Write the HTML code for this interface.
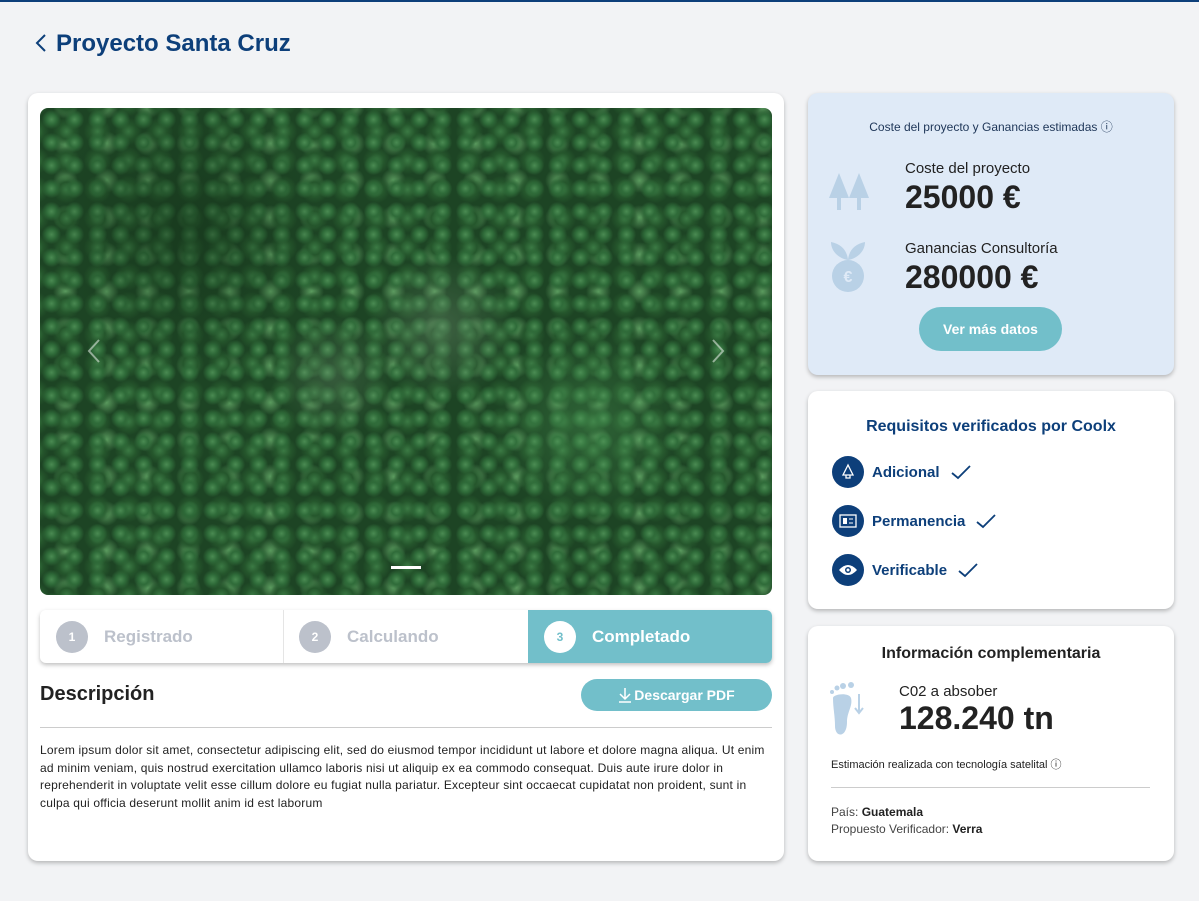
<!DOCTYPE html>
<html><head><meta charset="utf-8"><style>
*{box-sizing:border-box;margin:0;padding:0}
body{width:1199px;height:901px;background:#f2f3f5;font-family:"Liberation Sans",sans-serif;position:relative;overflow:hidden}
.abs{position:absolute}
.card{position:absolute;background:#fff;border-radius:10px;box-shadow:0 2px 4px rgba(0,0,0,.25)}
h1{position:absolute;left:56px;top:30px;font-size:24px;font-weight:bold;color:#0d3f7a}
.img{position:absolute;left:40px;top:108px;width:732px;height:487px;border-radius:8px;overflow:hidden;
background:
radial-gradient(circle at 55% 45%,rgba(120,150,120,.35) 0,transparent 15%),
radial-gradient(circle at 40% 55%,rgba(130,160,130,.25) 0,transparent 12%),
radial-gradient(circle at 75% 65%,rgba(80,160,90,.35) 0,transparent 15%),
radial-gradient(circle at 20% 25%,rgba(20,50,25,.5) 0,transparent 20%),
radial-gradient(circle,#4a8a52 0,#2f6b39 30%,transparent 60%) 0 0/23px 23px,
radial-gradient(circle,#3b7a44 0,#25562c 35%,transparent 65%) 11px 9px/31px 29px,
radial-gradient(circle,#5a9a5e 0,transparent 45%) 5px 17px/41px 37px,
#1d4424}
.step{position:absolute;top:610px;height:53px;display:flex;align-items:center;font-size:17px;font-weight:bold;color:#bcc1cb}
.num{width:32px;height:32px;border-radius:50%;background:#bcc1cb;color:#fff;font-size:12px;display:flex;align-items:center;justify-content:center;margin-right:16px}
.req{position:absolute;left:832px;display:flex;align-items:center;font-size:15px;font-weight:bold;color:#0d3f7a}
.ic{width:32px;height:32px;border-radius:50%;background:#0d3f7a;margin-right:8px;display:flex;align-items:center;justify-content:center}
</style></head><body>
<div class="abs" style="left:0;top:0;width:1199px;height:2px;background:#0d3f7a"></div>
<svg class="abs" style="left:34px;top:33px" width="14" height="20"><path d="M11 2 L3 10 L11 18" stroke="#0d3f7a" stroke-width="2" fill="none"/></svg>
<h1>Proyecto Santa Cruz</h1>

<div class="card" style="left:28px;top:93px;width:756px;height:768px"></div>
<div class="img"></div>
<svg class="abs" style="left:86px;top:338px" width="16" height="26"><path d="M13 2 L3 13 L13 24" stroke="rgba(255,255,255,.5)" stroke-width="2" fill="none"/></svg>
<svg class="abs" style="left:710px;top:338px" width="16" height="26"><path d="M3 2 L13 13 L3 24" stroke="rgba(255,255,255,.5)" stroke-width="2" fill="none"/></svg>
<div class="abs" style="left:391px;top:566px;width:30px;height:3px;background:#fff"></div>

<div class="card" style="left:40px;top:610px;width:732px;height:53px;border-radius:6px"></div>
<div class="abs" style="left:528px;top:610px;width:244px;height:53px;background:#72bfca;border-radius:0 6px 6px 0"></div>
<div class="abs" style="left:283px;top:610px;width:1px;height:53px;background:#e5e5e5"></div>
<div class="step" style="left:56px"><div class="num">1</div>Registrado</div>
<div class="step" style="left:299px"><div class="num">2</div>Calculando</div>
<div class="step" style="left:544px;color:#fff"><div class="num" style="background:#fff;color:#72bfca">3</div>Completado</div>

<div class="abs" style="left:40px;top:683px;font-size:20px;font-weight:bold;color:#222">Descripción</div>
<div class="abs" style="left:581px;top:679px;width:191px;height:32px;border-radius:16px;background:#72bfca;color:#fff;font-size:14px;font-weight:bold;display:flex;align-items:center;justify-content:center">
<svg width="14" height="16" style="margin-right:2px"><path d="M7 1 V12 M2 7 L7 12 L12 7 M1 15 H13" stroke="#fff" stroke-width="1.5" fill="none"/></svg>Descargar PDF</div>
<div class="abs" style="left:40px;top:727px;width:732px;height:1px;background:#ccc"></div>
<div class="abs" style="left:40px;top:742px;width:730px;font-size:12px;letter-spacing:.2px;line-height:17.5px;color:#222">Lorem ipsum dolor sit amet, consectetur adipiscing elit, sed do eiusmod tempor incididunt ut labore et dolore magna aliqua. Ut enim ad minim veniam, quis nostrud exercitation ullamco laboris nisi ut aliquip ex ea commodo consequat. Duis aute irure dolor in reprehenderit in voluptate velit esse cillum dolore eu fugiat nulla pariatur. Excepteur sint occaecat cupidatat non proident, sunt in culpa qui officia deserunt mollit anim id est laborum</div>

<div class="card" style="left:808px;top:93px;width:366px;height:282px;background:#dfeaf7"></div>
<div class="abs" style="left:808px;top:118px;width:366px;text-align:center;font-size:12px;color:#1d3557">Coste del proyecto y Ganancias estimadas ⓘ</div>
<svg class="abs" style="left:827px;top:165px" width="44" height="45"><path d="M12 8 L2 33 H10 V45 H14 V33 H22 Z M32 8 L22 33 H30 V45 H34 V33 H42 Z" fill="#b9d1e6"/></svg>
<div class="abs" style="left:905px;top:160px;font-size:15px;color:#222">Coste del proyecto</div>
<div class="abs" style="left:905px;top:179px;font-size:32px;font-weight:bold;color:#222">25000 €</div>
<svg class="abs" style="left:827px;top:240px" width="42" height="55"><path d="M21 20 C10 18 4 10 4 2 C14 4 20 10 21 20 C22 10 28 4 38 2 C38 10 32 18 21 20 Z" fill="#b9d1e6"/><circle cx="21" cy="36" r="16" fill="#b9d1e6"/><text x="21" y="42" text-anchor="middle" font-size="16" fill="#dfeaf7" font-family="Liberation Sans" font-weight="bold">€</text></svg>
<div class="abs" style="left:905px;top:240px;font-size:15px;color:#222">Ganancias Consultoría</div>
<div class="abs" style="left:905px;top:259px;font-size:32px;font-weight:bold;color:#222">280000 €</div>
<div class="abs" style="left:919px;top:307px;width:143px;height:44px;border-radius:22px;background:#72bfca;color:#fff;font-size:14px;font-weight:bold;display:flex;align-items:center;justify-content:center">Ver más datos</div>

<div class="card" style="left:808px;top:391px;width:366px;height:218px"></div>
<div class="abs" style="left:808px;top:418px;width:366px;text-align:center;font-size:16px;font-weight:bold;color:#0d3f7a">Requisitos verificados por Coolx</div>
<div class="req" style="top:456px"><div class="ic"><svg width="16" height="18"><path d="M8 2 L3 12 H13 Z M6 12 V15 H10 V12" stroke="#fff" fill="none" stroke-width="1.3"/></svg></div>Adicional<svg width="22" height="16" style="margin-left:10px"><path d="M2 9 L8 14 L20 2" stroke="#0d3f7a" stroke-width="1.8" fill="none"/></svg></div>
<div class="req" style="top:505px"><div class="ic"><svg width="18" height="14"><rect x="1" y="1" width="16" height="12" stroke="#fff" fill="none" stroke-width="1.3"/><rect x="4" y="4" width="4" height="6" fill="#fff"/><path d="M10 5 H14 M10 9 H14" stroke="#fff"/></svg></div>Permanencia<svg width="22" height="16" style="margin-left:10px"><path d="M2 9 L8 14 L20 2" stroke="#0d3f7a" stroke-width="1.8" fill="none"/></svg></div>
<div class="req" style="top:554px"><div class="ic"><svg width="20" height="14"><path d="M1 7 Q10 -3 19 7 Q10 17 1 7 Z" fill="#fff"/><circle cx="10" cy="7" r="3" fill="#0d3f7a"/><circle cx="10" cy="7" r="1.5" fill="#fff"/></svg></div>Verificable<svg width="22" height="16" style="margin-left:10px"><path d="M2 9 L8 14 L20 2" stroke="#0d3f7a" stroke-width="1.8" fill="none"/></svg></div>

<div class="card" style="left:808px;top:626px;width:366px;height:235px"></div>
<div class="abs" style="left:808px;top:645px;width:366px;text-align:center;font-size:16px;font-weight:bold;color:#222">Información complementaria</div>
<svg class="abs" style="left:829px;top:682px" width="38" height="56"><circle cx="3" cy="10" r="2" fill="#b9d1e6"/><circle cx="8" cy="6" r="2.5" fill="#b9d1e6"/><circle cx="14" cy="4" r="3" fill="#b9d1e6"/><circle cx="22" cy="3" r="3" fill="#b9d1e6"/><path d="M4 16 C4 12 20 10 22 16 C24 24 18 30 18 40 C18 56 6 56 6 44 C6 34 4 26 4 16 Z" fill="#b9d1e6"/><path d="M30 12 V30 M26 26 L30 31 L34 26" stroke="#b9d1e6" stroke-width="2" fill="none"/></svg>
<div class="abs" style="left:899px;top:683px;font-size:15px;color:#222">C02 a absober</div>
<div class="abs" style="left:899px;top:700px;font-size:32px;font-weight:bold;color:#222">128.240 tn</div>
<div class="abs" style="left:831px;top:756px;font-size:11px;color:#222">Estimación realizada con tecnología satelital ⓘ</div>
<div class="abs" style="left:831px;top:787px;width:319px;height:1px;background:#ccc"></div>
<div class="abs" style="left:831px;top:804px;font-size:12px;line-height:17px;color:#444">País: <b style="color:#222">Guatemala</b><br>Propuesto Verificador: <b style="color:#222">Verra</b></div>
</body></html>
